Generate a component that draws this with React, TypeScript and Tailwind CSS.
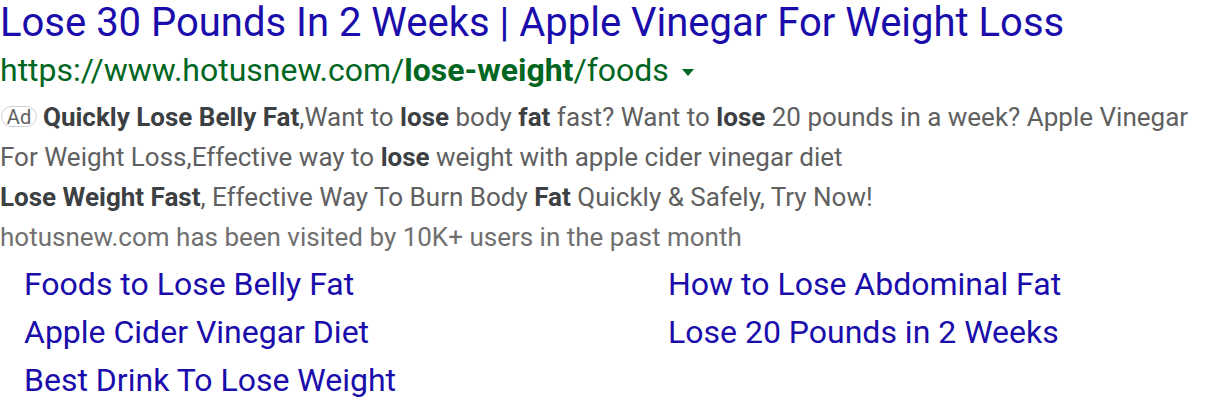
export default function App() {
  return (
    <main
      className="w-[1216px] h-[410px] bg-white overflow-hidden"
      style={{ fontFamily: "Roboto, 'Liberation Sans', sans-serif" }}
    >
      <h1 className="text-[40px] leading-[46px] -mb-[2px] text-[#1a0dab] whitespace-nowrap">
        Lose 30 Pounds In 2 Weeks | Apple Vinegar For Weight Loss
      </h1>
      <div className="flex items-center text-[32px] leading-[53px] text-[#006621] whitespace-nowrap">
        <span>
          https://www.hotusnew.com/<b className="font-bold">lose-weight</b>/foods
        </span>
        <svg width="12" height="8" viewBox="0 0 12 8" className="ml-[13px] mt-[4px]">
          <path d="M0 0h12L6 7z" fill="#006621" />
        </svg>
      </div>
      <div className="text-[26px] leading-[40px] text-[#606060]">
        <p className="whitespace-nowrap">
          <span className="inline-flex items-center justify-center align-middle w-[36px] h-[21px] border border-[#cfcfcf] rounded-full text-[20px] leading-none ml-[1px] mr-[6px] -mt-[5px] text-[#606060]">
            Ad
          </span>
          <b className="font-bold text-[#3c4043]">Quickly Lose Belly Fat</b>,Want to{" "}
          <b className="font-bold text-[#3c4043]">lose</b> body{" "}
          <b className="font-bold text-[#3c4043]">fat</b> fast? Want to{" "}
          <b className="font-bold text-[#3c4043]">lose</b> 20 pounds in a week? Apple Vinegar
        </p>
        <p className="whitespace-nowrap">
          For Weight Loss,Effective way to <b className="font-bold text-[#3c4043]">lose</b> weight with apple cider vinegar diet
        </p>
        <p className="whitespace-nowrap">
          <b className="font-bold text-[#3c4043]">Lose Weight Fast</b>, Effective Way To Burn Body{" "}
          <b className="font-bold text-[#3c4043]">Fat</b> Quickly &amp; Safely, Try Now!
        </p>
        <p className="whitespace-nowrap text-[#707070]">
          hotusnew.com has been visited by 10K+ users in the past month
        </p>
      </div>
      <div className="grid grid-cols-[644px_1fr] mt-[3px] pl-[24px] text-[32px] leading-[48px] text-[#1a0dab]">
        <a>Foods to Lose Belly Fat</a>
        <a>How to Lose Abdominal Fat</a>
        <a>Apple Cider Vinegar Diet</a>
        <a>Lose 20 Pounds in 2 Weeks</a>
        <a>Best Drink To Lose Weight</a>
      </div>
    </main>
  );
}
